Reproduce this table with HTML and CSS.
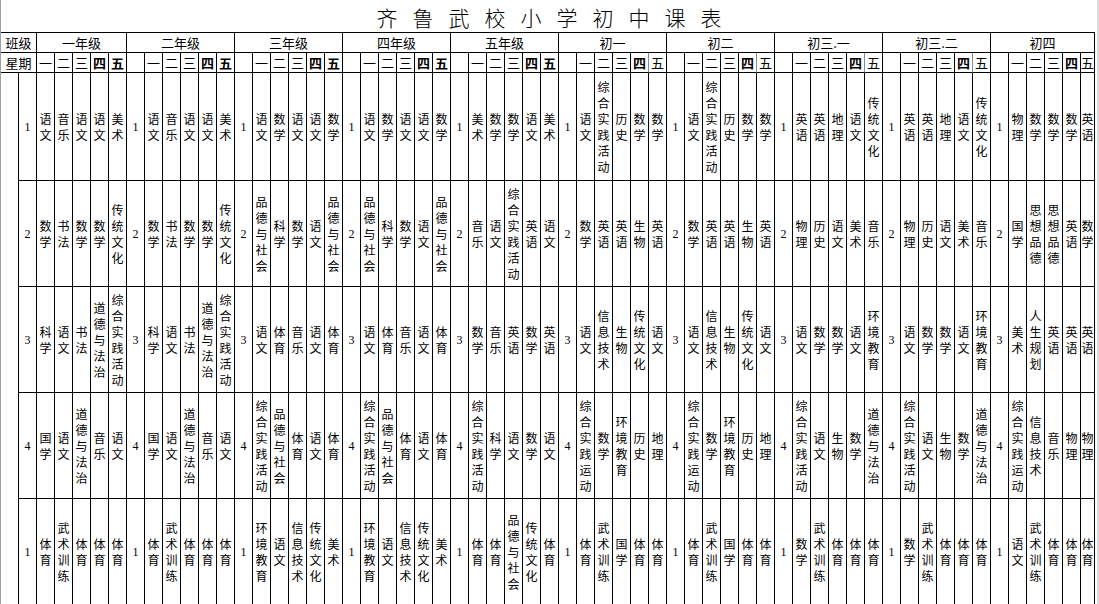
FILE: index.html
```html
<!DOCTYPE html>
<html lang="zh-CN">
<head>
<meta charset="utf-8">
<title>齐鲁武校小学初中课表</title>
<link rel="stylesheet" href="styles.css">
</head>
<body>
<div class="page">
  <h1 class="title">齐鲁武校小学初中课表</h1>
  <div class="grid">
    <!-- 班级 -->
    <div class="h s2">班级</div>
    <div class="h s5">一年级</div>
    <div class="h s6">二年级</div>
    <div class="h s6">三年级</div>
    <div class="h s6">四年级</div>
    <div class="h s6">五年级</div>
    <div class="h s6">初一</div>
    <div class="h s6">初二</div>
    <div class="h s6">初三.一</div>
    <div class="h s6">初三.二</div>
    <div class="h s6">初四</div>
    <!-- 星期 -->
    <div class="h s2">星期</div>
    <div class="h">一</div><div class="h">二</div><div class="h">三</div><div class="h b">四</div><div class="h b">五</div>
    <div class="h"></div><div class="h">一</div><div class="h">二</div><div class="h">三</div><div class="h b">四</div><div class="h b">五</div>
    <div class="h"></div><div class="h">一</div><div class="h">二</div><div class="h">三</div><div class="h b">四</div><div class="h b">五</div>
    <div class="h"></div><div class="h">一</div><div class="h">二</div><div class="h">三</div><div class="h b">四</div><div class="h b">五</div>
    <div class="h"></div><div class="h">一</div><div class="h">二</div><div class="h">三</div><div class="h b">四</div><div class="h b">五</div>
    <div class="h"></div><div class="h">一</div><div class="h">二</div><div class="h">三</div><div class="h b soft">四</div><div class="h">五</div>
    <div class="h"></div><div class="h">一</div><div class="h">二</div><div class="h">三</div><div class="h b soft">四</div><div class="h">五</div>
    <div class="h"></div><div class="h">一</div><div class="h">二</div><div class="h">三</div><div class="h b soft">四</div><div class="h">五</div>
    <div class="h"></div><div class="h">一</div><div class="h">二</div><div class="h">三</div><div class="h b soft">四</div><div class="h">五</div>
    <div class="h"></div><div class="h">一</div><div class="h">二</div><div class="h">三</div><div class="h b">四</div><div class="h">五</div>

    <!-- 第1节 -->
    <div class="side"></div>
    <div class="n">1</div><div>语文</div><div>音乐</div><div>语文</div><div>语文</div><div>美术</div>
    <div class="n">1</div><div>语文</div><div>音乐</div><div>语文</div><div>语文</div><div>美术</div>
    <div class="n">1</div><div>语文</div><div>数学</div><div>语文</div><div>语文</div><div>数学</div>
    <div class="n">1</div><div>语文</div><div>数学</div><div>语文</div><div>语文</div><div>数学</div>
    <div class="n">1</div><div>美术</div><div>数学</div><div>数学</div><div>语文</div><div>美术</div>
    <div class="n">1</div><div>语文</div><div>综合实践活动</div><div>历史</div><div>数学</div><div>数学</div>
    <div class="n">1</div><div>语文</div><div>综合实践活动</div><div>历史</div><div>数学</div><div>数学</div>
    <div class="n">1</div><div>英语</div><div>英语</div><div>地理</div><div>语文</div><div>传统文化</div>
    <div class="n">1</div><div>英语</div><div>英语</div><div>地理</div><div>语文</div><div>传统文化</div>
    <div class="n">1</div><div>物理</div><div>数学</div><div>数学</div><div>数学</div><div>英语</div>

    <!-- 第2节 -->
    <div class="n">2</div><div>数学</div><div>书法</div><div>数学</div><div>数学</div><div>传统文化</div>
    <div class="n">2</div><div>数学</div><div>书法</div><div>数学</div><div>数学</div><div>传统文化</div>
    <div class="n">2</div><div>品德与社会</div><div>科学</div><div>数学</div><div>语文</div><div>品德与社会</div>
    <div class="n">2</div><div>品德与社会</div><div>科学</div><div>数学</div><div>语文</div><div>品德与社会</div>
    <div class="n">2</div><div>音乐</div><div>语文</div><div>综合实践活动</div><div>英语</div><div>语文</div>
    <div class="n">2</div><div>数学</div><div>英语</div><div>英语</div><div>生物</div><div>英语</div>
    <div class="n">2</div><div>数学</div><div>英语</div><div>英语</div><div>生物</div><div>英语</div>
    <div class="n">2</div><div>物理</div><div>历史</div><div>语文</div><div>美术</div><div>音乐</div>
    <div class="n">2</div><div>物理</div><div>历史</div><div>语文</div><div>美术</div><div>音乐</div>
    <div class="n">2</div><div>国学</div><div>思想品德</div><div>思想品德</div><div>英语</div><div>数学</div>

    <!-- 第3节 -->
    <div class="n">3</div><div>科学</div><div>语文</div><div>书法</div><div>道德与法治</div><div>综合实践活动</div>
    <div class="n">3</div><div>科学</div><div>语文</div><div>书法</div><div>道德与法治</div><div>综合实践活动</div>
    <div class="n">3</div><div>语文</div><div>体育</div><div>音乐</div><div>语文</div><div>体育</div>
    <div class="n">3</div><div>语文</div><div>体育</div><div>音乐</div><div>语文</div><div>体育</div>
    <div class="n">3</div><div>数学</div><div>音乐</div><div>英语</div><div>数学</div><div>英语</div>
    <div class="n">3</div><div>语文</div><div>信息技术</div><div>生物</div><div>传统文化</div><div>语文</div>
    <div class="n">3</div><div>语文</div><div>信息技术</div><div>生物</div><div>传统文化</div><div>语文</div>
    <div class="n">3</div><div>语文</div><div>数学</div><div>数学</div><div>语文</div><div>环境教育</div>
    <div class="n">3</div><div>语文</div><div>数学</div><div>数学</div><div>语文</div><div>环境教育</div>
    <div class="n">3</div><div>美术</div><div>人生规划</div><div>英语</div><div>英语</div><div>英语</div>

    <!-- 第4节 -->
    <div class="n">4</div><div>国学</div><div>语文</div><div>道德与法治</div><div>音乐</div><div>语文</div>
    <div class="n">4</div><div>国学</div><div>语文</div><div>道德与法治</div><div>音乐</div><div>语文</div>
    <div class="n">4</div><div>综合实践活动</div><div>品德与社会</div><div>体育</div><div>语文</div><div>体育</div>
    <div class="n">4</div><div>综合实践活动</div><div>品德与社会</div><div>体育</div><div>语文</div><div>体育</div>
    <div class="n">4</div><div>综合实践活动</div><div>科学</div><div>语文</div><div>数学</div><div>语文</div>
    <div class="n">4</div><div>综合实践运动</div><div>数学</div><div>环境教育</div><div>历史</div><div>地理</div>
    <div class="n">4</div><div>综合实践运动</div><div>数学</div><div>环境教育</div><div>历史</div><div>地理</div>
    <div class="n">4</div><div>综合实践活动</div><div>语文</div><div>生物</div><div>数学</div><div>道德与法治</div>
    <div class="n">4</div><div>综合实践活动</div><div>语文</div><div>生物</div><div>数学</div><div>道德与法治</div>
    <div class="n">4</div><div>综合实践运动</div><div>信息技术</div><div>音乐</div><div>物理</div><div>物理</div>

    <!-- 下午第1节 -->
    <div class="n">1</div><div>体育</div><div>武术训练</div><div>体育</div><div>体育</div><div>体育</div>
    <div class="n">1</div><div>体育</div><div>武术训练</div><div>体育</div><div>体育</div><div>体育</div>
    <div class="n">1</div><div>环境教育</div><div>语文</div><div>信息技术</div><div>传统文化</div><div>美术</div>
    <div class="n">1</div><div>环境教育</div><div>语文</div><div>信息技术</div><div>传统文化</div><div>美术</div>
    <div class="n">1</div><div>体育</div><div>体育</div><div>品德与社会</div><div>传统文化</div><div>体育</div>
    <div class="n">1</div><div>体育</div><div>武术训练</div><div>国学</div><div>体育</div><div>体育</div>
    <div class="n">1</div><div>体育</div><div>武术训练</div><div>国学</div><div>体育</div><div>体育</div>
    <div class="n">1</div><div>数学</div><div>武术训练</div><div>体育</div><div>体育</div><div>体育</div>
    <div class="n">1</div><div>数学</div><div>武术训练</div><div>体育</div><div>体育</div><div>体育</div>
    <div class="n">1</div><div>语文</div><div>武术训练</div><div>体育</div><div>体育</div><div>体育</div>
  </div>
</div>
</body>
</html>
```

FILE: styles.css
```css
html, body {
  margin: 0;
  padding: 0;
  overflow: hidden;
  background: #fff;
}

body {
  font-family: "Noto Sans CJK SC", sans-serif;
  color: #000;
}

.page {
  width: 1096px;
  height: 604px;
  border-left: 1px solid #a0a0a0;
  border-right: 2px solid #dcdcdc;
  overflow: hidden;
}

.title {
  margin: 0;
  height: 32px;
  box-sizing: border-box;
  padding: 6px 0 0 15px;
  font-size: 21px;
  line-height: 22px;
  font-weight: 300;
  letter-spacing: 15px;
  text-align: center;
  color: #000;
}

.grid {
  display: grid;
  width: 1094px;
  grid-template-columns: repeat(60, 18px) 14px;
  grid-template-rows: 20px 20px 108px repeat(4, 106px);
  border-top: 1px solid #000;
}

.grid > div {
  box-sizing: border-box;
  border-right: 1px solid #000;
  border-bottom: 1px solid #000;
  display: flex;
  align-items: center;
  justify-content: center;
  text-align: center;
  font-size: 12px;
  line-height: 16px;
  overflow: hidden;
}

.grid > .h {
  font-size: 13px;
  line-height: 16px;
}

.grid > .b {
  font-weight: 700;
}

.grid > .soft {
  border-right-color: #8a8a8a;
}

.s2 { grid-column: span 2; }
.s5 { grid-column: span 5; }
.s6 { grid-column: span 6; }

.grid > .side {
  grid-row: 3 / span 5;
}

.grid > .n {
  font-family: "Liberation Serif", serif;
  font-size: 12px;
}
```
